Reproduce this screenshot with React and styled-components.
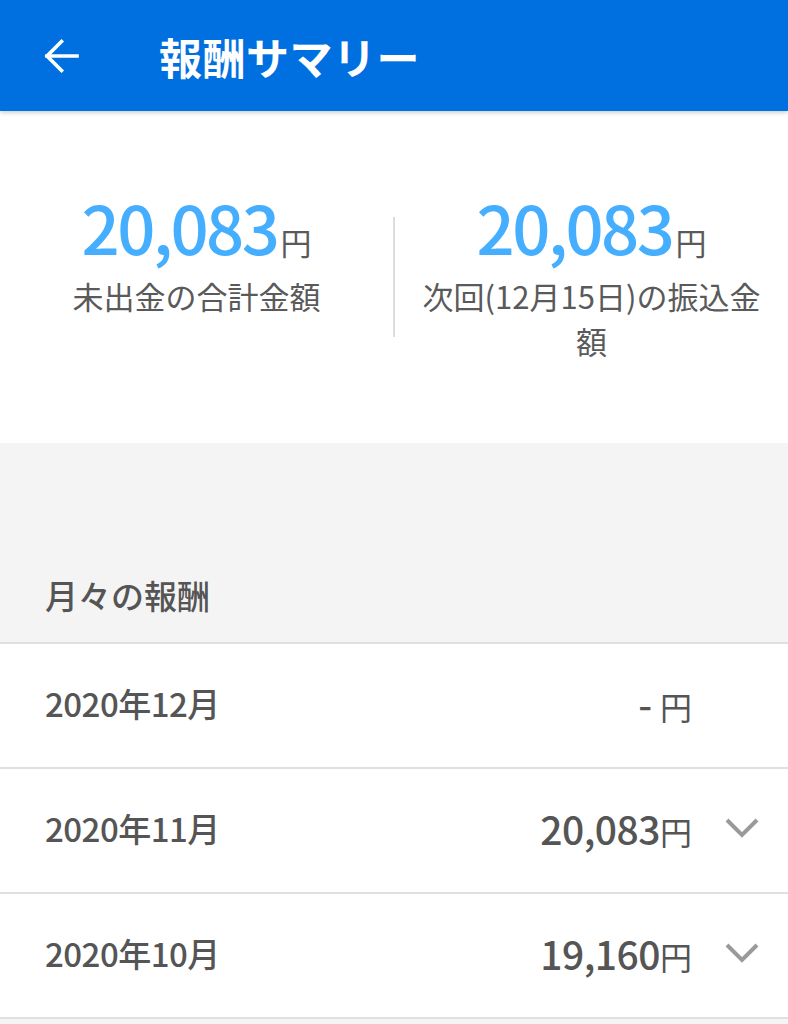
import React from 'react';
import styled, { createGlobalStyle } from 'styled-components';

const GlobalStyle = createGlobalStyle`
    html, body {
        margin: 0;
        padding: 0;
        background: #f4f4f4;
        font-family: "Noto Sans CJK JP", "Noto Sans", sans-serif;
    }
`;

const Page = styled.div`
    width: 788px;
    min-height: 1024px;
    background: #f4f4f4;
`;

const Header = styled.header`
    position: relative;
    z-index: 1;
    height: 111px;
    display: flex;
    align-items: center;
    padding-left: 44px;
    background: #0070e0;
    box-shadow: 0 2px 4px rgba(0, 0, 0, 0.18);
`;

const BackButton = styled.button`
    display: flex;
    padding: 0;
    border: none;
    background: none;
    cursor: pointer;
`;

const Title = styled.h1`
    margin: 0 0 0 79px;
    color: #fff;
    font-size: 43px;
    font-weight: 700;
    letter-spacing: 0.5px;
`;

const Summary = styled.section`
    height: 332px;
    display: flex;
    align-items: flex-start;
    padding-top: 71px;
    box-sizing: border-box;
    background: #fff;
`;

const SummaryColumn = styled.div`
    flex: 1;
    padding: 0 24px;
    text-align: center;
`;

const VerticalRule = styled.div`
    width: 2px;
    height: 120px;
    margin-top: 35px;
    background: #dcdcdc;
`;

const Amount = styled.div`
    color: #45aeff;
    font-size: 67px;
    font-weight: 500;
    line-height: 1.3;
    letter-spacing: -2.5px;
`;

const Yen = styled.span`
    margin-left: 3px;
    color: #5a5a5a;
    font-size: 31px;
    font-weight: 400;
    letter-spacing: 0;
`;

const Caption = styled.p`
    margin: 4px 0 0;
    color: #5a5a5a;
    font-size: 31px;
    line-height: 45px;
`;

const SectionHead = styled.div`
    height: 199px;
    display: flex;
    align-items: flex-end;
    padding: 0 0 23px 45px;
    box-sizing: border-box;
    color: #555;
    font-size: 33px;
    font-weight: 500;
`;

const List = styled.ul`
    margin: 0;
    padding: 0;
    list-style: none;
    border-top: 2px solid #e0e0e0;
`;

const Row = styled.li`
    height: 125px;
    display: flex;
    align-items: center;
    padding: 0 29px 5px 45px;
    box-sizing: border-box;
    background: #fff;
    border-bottom: 2px solid #e0e0e0;
    color: #555;
`;

const Month = styled.span`
    flex: 1;
    font-size: 33px;
    font-weight: 500;
    letter-spacing: -0.5px;
`;

const Value = styled.span`
    font-size: 39px;
    font-weight: 500;
    letter-spacing: -0.5px;
`;

const ValueYen = styled.span`
    font-size: 32px;
    font-weight: 400;
    letter-spacing: 0;
`;

const ChevronSlot = styled.span`
    width: 34px;
    height: 22px;
    display: flex;
    margin-left: 33px;
`;

const ArrowLeft = () => (
    <svg width="36" height="36" viewBox="0 0 36 36" fill="none" stroke="#fff" strokeWidth="3.6" strokeLinecap="square">
        <path d="M3 18 H33" />
        <path d="M17.5 3.5 L3 18 L17.5 32.5" />
    </svg>
);

const Chevron = () => (
    <svg width="34" height="22" viewBox="0 0 34 22" fill="none" stroke="#9a9a9a" strokeWidth="4">
        <path d="M2 3 L17 18 L32 3" />
    </svg>
);

const months = [
    { label: '2020年12月', amount: null },
    { label: '2020年11月', amount: '20,083' },
    { label: '2020年10月', amount: '19,160' },
];

const App = () => {
    return (
        <Page>
            <GlobalStyle />
            <Header>
                <BackButton aria-label="戻る"><ArrowLeft /></BackButton>
                <Title>報酬サマリー</Title>
            </Header>

            <Summary>
                <SummaryColumn>
                    <Amount>20,083<Yen>円</Yen></Amount>
                    <Caption>未出金の合計金額</Caption>
                </SummaryColumn>
                <VerticalRule />
                <SummaryColumn>
                    <Amount>20,083<Yen>円</Yen></Amount>
                    <Caption>次回(12月15日)の振込金額</Caption>
                </SummaryColumn>
            </Summary>

            <SectionHead>月々の報酬</SectionHead>

            <List>
                {months.map(({ label, amount }) => (
                    <Row key={label}>
                        <Month>{label}</Month>
                        <Value>{amount ? amount : '- '}<ValueYen>円</ValueYen></Value>
                        <ChevronSlot>{amount && <Chevron />}</ChevronSlot>
                    </Row>
                ))}
            </List>
        </Page>
    );
};

export default App;
